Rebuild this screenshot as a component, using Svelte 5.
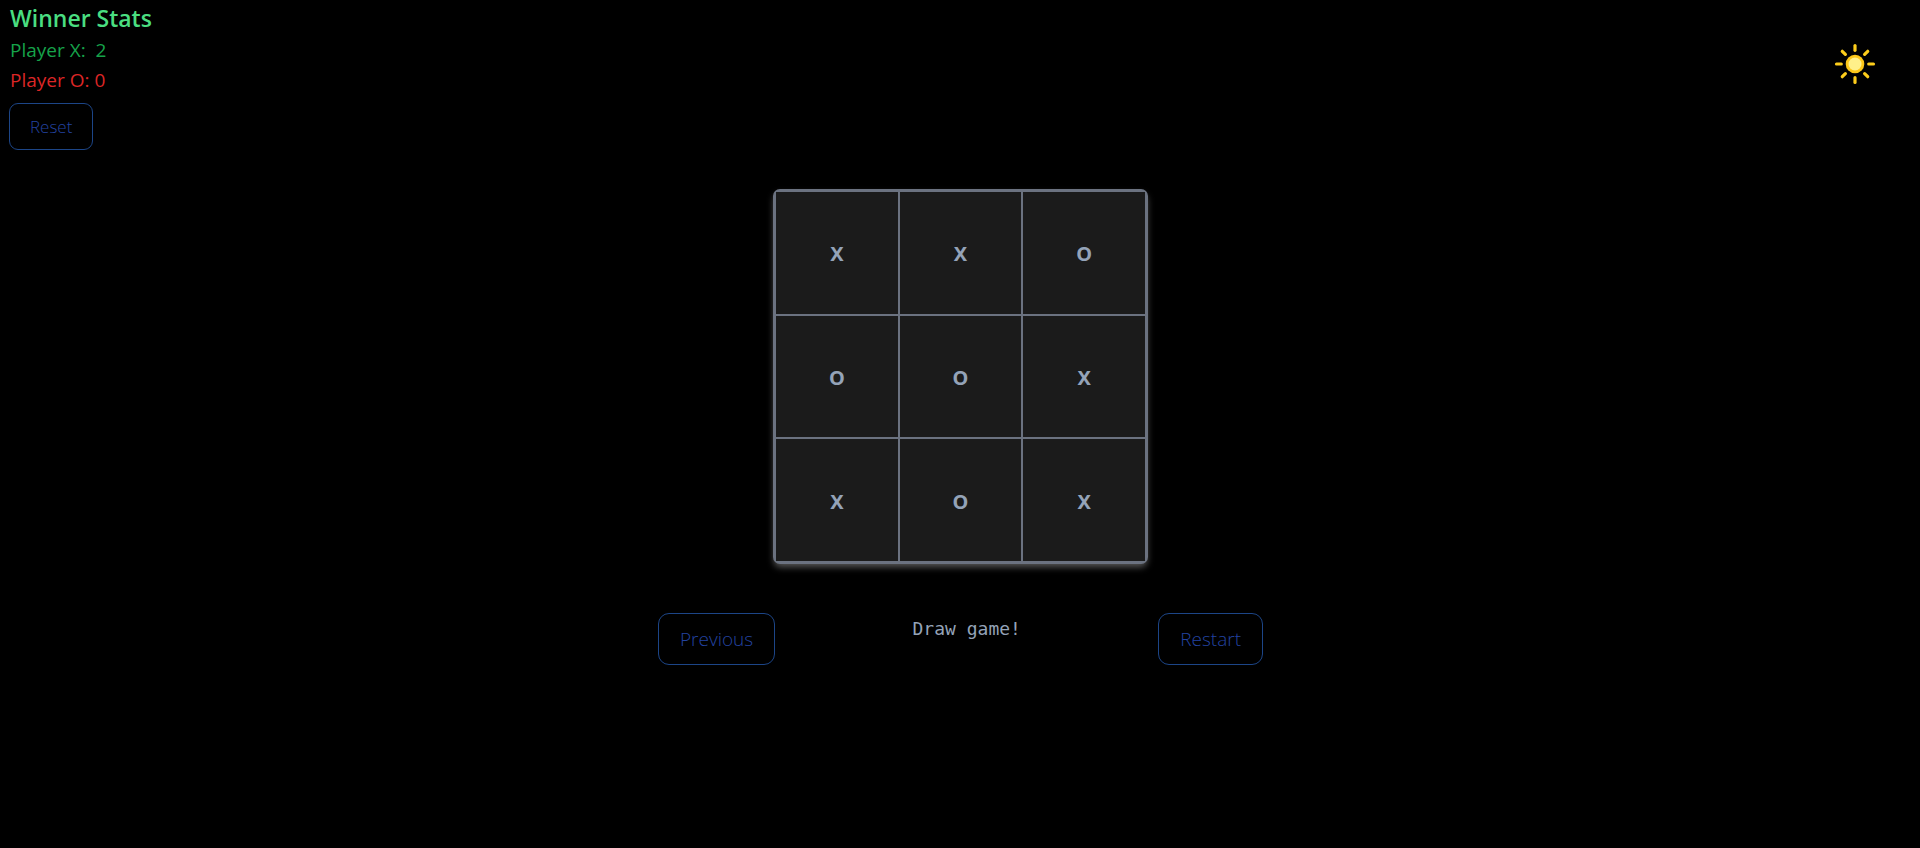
<script>
  const cells = ['X', 'X', 'O', 'O', 'O', 'X', 'X', 'O', 'X'];
  let wins = $state({ x: 2, o: 0 });
  const rays = [0, 45, 90, 135, 180, 225, 270, 315];
</script>

<div class="page">
  <header>
    <section class="stats">
      <h1>Winner Stats</h1>
      <p class="x">Player X: &nbsp;{wins.x}</p>
      <p class="o">Player O: {wins.o}</p>
      <button class="small" onclick={() => (wins = { x: 0, o: 0 })}>Reset</button>
    </section>
    <button class="theme" aria-label="Toggle theme">
      <svg width="42" height="42" viewBox="0 0 42 42" aria-hidden="true">
        <g stroke="#fccc1b" stroke-width="3.2" stroke-linecap="round">
          {#each rays as angle}
            <path d={angle % 90 ? 'M21 3V7.4' : 'M21 2.5V7.3'} transform={`rotate(${angle} 21 21)`} />
          {/each}
        </g>
        <circle cx="21" cy="21" r="9.3" fill="#fcc719" />
        <circle cx="21" cy="21" r="6.5" fill="#fff08a" />
      </svg>
    </button>
  </header>

  <main>
    <div class="board">
      {#each cells as cell}
        <button class="cell">{cell}</button>
      {/each}
    </div>
    <div class="controls">
      <button class="large">Previous</button>
      <p>Draw game!</p>
      <button class="large">Restart</button>
    </div>
  </main>
</div>

<style>
  :global(body) {
    margin: 0;
    background: #000;
  }
  .page {
    min-height: 100vh;
    background: #000;
    font-family: "Segoe UI", "Open Sans", "Noto Sans", sans-serif;
  }
  button {
    font-family: inherit;
    cursor: pointer;
  }
  h1,
  p {
    margin: 0;
  }
  header {
    display: flex;
    justify-content: space-between;
    padding: 2px 44px 0 9px;
  }
  .stats {
    display: flex;
    flex-direction: column;
    align-items: flex-start;
  }
  .stats h1,
  .stats p {
    padding-left: 1px;
  }
  h1 {
    font-size: 23px;
    line-height: 33px;
    font-weight: 600;
    color: #4ade80;
  }
  .stats p {
    font-size: 19px;
    line-height: 30px;
  }
  .stats .x {
    color: #16a34a;
  }
  .stats .o {
    color: #dc2626;
  }
  .small,
  .large {
    border: 1px solid #1c4587;
    background: transparent;
    color: #2343a0;
    font-weight: 300;
  }
  .small {
    margin-top: 8px;
    padding: 10px 20px;
    border-radius: 9px;
    font-size: 17px;
    line-height: 25px;
  }
  .large {
    padding: 12px 21px;
    border-radius: 11px;
    font-size: 19px;
    line-height: 26px;
  }
  .theme {
    align-self: flex-start;
    display: flex;
    margin-top: 41px;
    padding: 0;
    border: 0;
    background: none;
  }
  main {
    display: flex;
    flex-direction: column;
    align-items: center;
    padding: 39px 0 0 1px;
  }
  .board {
    display: grid;
    grid-template-columns: repeat(3, 1fr);
    gap: 2px;
    width: 369px;
    aspect-ratio: 1;
    border: 3px solid #6b7280;
    border-radius: 7px;
    background: #6b7280;
    box-shadow: 0 4px 7px -1px rgba(255, 255, 255, 0.35);
  }
  .cell {
    padding: 2px 0 0;
    border: 0;
    background: #1b1b1b;
    color: #94a3b8;
    font-family: "Noto Sans", sans-serif;
    font-size: 20px;
    font-weight: 700;
  }
  .controls {
    display: flex;
    justify-content: space-between;
    width: 605px;
    margin-top: 49px;
  }
  .controls p {
    font-family: Consolas, "DejaVu Sans Mono", monospace;
    font-size: 18px;
    line-height: 32px;
    color: #94a3b8;
  }
</style>
